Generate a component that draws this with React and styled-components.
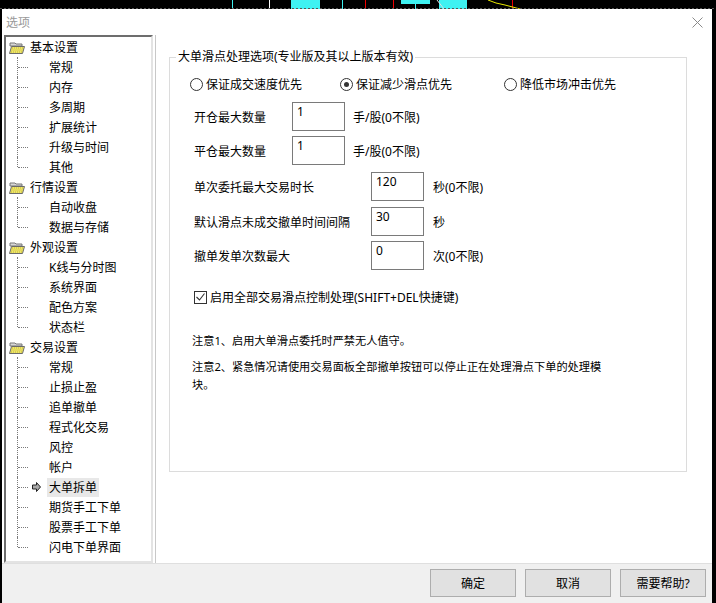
import React from 'react'
import styled, { createGlobalStyle } from 'styled-components'

const Global = createGlobalStyle`
  html, body {
    margin: 0;
    padding: 0;
    background: #000;
  }
  body {
    font-family: "Noto Sans", "Noto Sans CJK SC", sans-serif;
    font-size: 12px;
    color: #000;
  }
`

const Screen = styled.div`
  width: 716px;
  height: 603px;
  overflow: hidden;
  background: #000;
`

const Dialog = styled.div`
  margin-left: 2px;
  width: 710px;
  height: 594px;
  background: #fff;
  display: flex;
  flex-direction: column;
`

const TitleBar = styled.div`
  height: 26px;
  display: flex;
  align-items: center;
  justify-content: space-between;
  padding: 0 9px 0 4px;
  color: #999;
  font-size: 12px;
`

const Body = styled.div`
  height: 528px;
  display: flex;
`

const Tree = styled.div`
  margin-left: 2px;
  width: 145px;
  height: 524px;
  border-top: 2px solid #6d6d6d;
  border-left: 2px solid #6d6d6d;
  border-right: 2px solid #e3e3e3;
  border-bottom: 2px solid #e3e3e3;
  box-shadow: 2px 0 0 #fff, 3px 0 0 #c8c8c8;
  background: #fff;
  overflow: hidden;
`

const GroupRow = styled.div`
  height: 20px;
  display: flex;
  align-items: center;
  padding-left: 3px;
  gap: 5px;
  white-space: nowrap;
`

const ChildRow = styled.div`
  position: relative;
  height: 20px;
  display: flex;
  align-items: center;
  padding-left: 43px;
  white-space: nowrap;

  &::before {
    content: '';
    position: absolute;
    left: 11px;
    top: 0;
    height: ${({ $last }) => ($last ? '10px' : '20px')};
    border-left: 1px dotted #7a7a7a;
  }
  &::after {
    content: '';
    position: absolute;
    left: 12px;
    top: 10px;
    width: 10px;
    border-top: 1px dotted #7a7a7a;
  }
`

const ItemText = styled.span`
  padding: 0 2px;
  margin-left: -2px;
  line-height: 19px;
  background: ${({ $selected }) => ($selected ? '#e8e8e8' : 'transparent')};
`

const Pointer = styled.svg`
  position: absolute;
  left: 26px;
  top: 5px;
`

const Main = styled.div`
  flex: 1;
  padding-left: 16px;
`

const Group = styled.div`
  position: relative;
  margin-top: 22px;
  width: 516px;
  height: 395px;
  border: 1px solid #dcdcdc;
  padding: 18px 0 0 0;
  box-sizing: content-box;
`

const Legend = styled.span`
  position: absolute;
  top: -9px;
  left: 6px;
  padding: 0 2px;
  background: #fff;
  line-height: 16px;
`

const RadioRow = styled.div`
  display: flex;
  height: 16px;
  align-items: center;
  padding-left: 20px;
`

const RadioItem = styled.label`
  display: flex;
  align-items: center;
  gap: 3px;
  width: ${({ $w }) => $w}px;
  white-space: nowrap;
`

const RadioDot = styled.span`
  width: 11px;
  height: 11px;
  border: 1px solid #333;
  border-radius: 50%;
  display: flex;
  align-items: center;
  justify-content: center;

  &::after {
    content: '';
    width: 5px;
    height: 5px;
    border-radius: 50%;
    background: ${({ $on }) => ($on ? '#333' : 'transparent')};
  }
`

const FieldRow = styled.div`
  display: flex;
  align-items: center;
  height: 29px;
  margin-top: ${({ $top }) => $top}px;
  padding-left: 24px;
`

const FieldLabel = styled.span`
  width: ${({ $w }) => $w}px;
  white-space: nowrap;
`

const NumBox = styled.div`
  width: 51px;
  height: 27px;
  border: 1px solid #7a7a7a;
  padding: 1px 0 0 4px;
  box-sizing: border-box;
  width: 53px;
  height: 29px;
  line-height: 16px;
`

const Unit = styled.span`
  margin-left: ${({ $gap }) => $gap}px;
  white-space: nowrap;
`

const CheckRow = styled.div`
  display: flex;
  align-items: center;
  gap: 3px;
  height: 16px;
  margin-top: 19px;
  padding-left: 24px;
`

const CheckBox = styled.span`
  width: 11px;
  height: 11px;
  border: 1px solid #333;
  display: flex;
  align-items: center;
  justify-content: center;
`

const Notes = styled.div`
  margin-top: 27px;
  padding-left: 22px;
  width: 424px;
  display: flex;
  flex-direction: column;
  gap: 8px;
`

const Note = styled.p`
  margin: 0;
  font-size: 11.2px;
  line-height: 18px;
`

const Footer = styled.div`
  height: 40px;
  background: #f0f0f0;
  border-top: 1px solid #dfdfdf;
  box-sizing: border-box;
  display: flex;
  justify-content: flex-end;
  align-items: flex-start;
  padding: 5px 6px 0 0;
  gap: 9px;
`

const Button = styled.button`
  width: 86px;
  height: 28px;
  background: #e1e1e1;
  border: 1px solid #adadad;
  font-family: inherit;
  font-size: 12px;
  color: #000;
  padding: 0;
`

const Folder = () => (
  <svg width="16" height="13" viewBox="0 0 16 13">
    <path d="M1 2h5l1 1h6v2H1z" fill="#d8d8d8" stroke="#777" />
    <path d="M0.5 12.5L2.5 5.5h13l-2 7z" fill="#ece56f" stroke="#6a6a6a" />
    <path d="M3 7h11M2.5 9h11M2 11h11" stroke="#c9b92a" strokeDasharray="1 1" />
  </svg>
)

const ChartStrip = () => (
  <svg width="716" height="9" style={{ display: 'block' }}>
    <rect x="291" y="0" width="29" height="9" fill="#3ff2f2" />
    <rect x="401" y="0" width="29" height="4" fill="#3ff2f2" />
    <rect x="439" y="0" width="28" height="9" fill="#3ff2f2" />
    <line x1="232.5" y1="0" x2="232.5" y2="9" stroke="#3ff2f2" />
    <line x1="269.5" y1="0" x2="269.5" y2="9" stroke="#fff" />
    <line x1="342.5" y1="0" x2="342.5" y2="9" stroke="#3ff2f2" />
    <line x1="365.5" y1="0" x2="365.5" y2="9" stroke="#e00" />
    <line x1="393.5" y1="0" x2="393.5" y2="9" stroke="#e00" />
    <line x1="415.5" y1="4" x2="415.5" y2="9" stroke="#3ff2f2" />
    <line x1="437" y1="0" x2="444" y2="9" stroke="#ddd" />
    <line x1="512.5" y1="0" x2="512.5" y2="9" stroke="#e00" />
    <polyline points="488,0 496,3 505,5 520,9" fill="none" stroke="#e8e800" />
    <line x1="0" y1="8.5" x2="716" y2="8.5" stroke="#555" strokeDasharray="2 2" />
  </svg>
)

const tree = [
  { name: '基本设置', items: ['常规', '内存', '多周期', '扩展统计', '升级与时间', '其他'] },
  { name: '行情设置', items: ['自动收盘', '数据与存储'] },
  { name: '外观设置', items: ['K线与分时图', '系统界面', '配色方案', '状态栏'] },
  {
    name: '交易设置',
    items: ['常规', '止损止盈', '追单撤单', '程式化交易', '风控', '帐户', '大单拆单', '期货手工下单', '股票手工下单', '闪电下单界面']
  }
]

const fields = [
  { label: '开仓最大数量', value: '1', unit: '手/股(0不限)', w: 98, top: 10, gap: 8 },
  { label: '平仓最大数量', value: '1', unit: '手/股(0不限)', w: 98, top: 5, gap: 8 },
  { label: '单次委托最大交易时长', value: '120', unit: '秒(0不限)', w: 177, top: 7, gap: 9 },
  { label: '默认滑点未成交撤单时间间隔', value: '30', unit: '秒', w: 177, top: 6, gap: 9 },
  { label: '撤单发单次数最大', value: '0', unit: '次(0不限)', w: 177, top: 5, gap: 9 }
]

export default function App() {
  const selected = '大单拆单'
  return (
    <Screen>
      <Global />
      <ChartStrip />
      <Dialog>
        <TitleBar>
          <span>选项</span>
          <svg width="11" height="11" viewBox="0 0 11 11">
            <path d="M0.5 0.5l10 10M10.5 0.5l-10 10" stroke="#8a8a8a" strokeWidth="1" />
          </svg>
        </TitleBar>
        <Body>
          <Tree>
            {tree.map((g) => (
              <div key={g.name}>
                <GroupRow>
                  <Folder />
                  <span>{g.name}</span>
                </GroupRow>
                {g.items.map((it, i) => (
                  <ChildRow key={it + i} $last={i === g.items.length - 1}>
                    {g.name === '交易设置' && it === selected && (
                      <Pointer width="9" height="10" viewBox="0 0 9 10">
                        <path d="M0.5 3h4V0.5L8.5 5l-4 4.5V7h-4z" fill="#a8a8a8" stroke="#222" />
                      </Pointer>
                    )}
                    <ItemText $selected={g.name === '交易设置' && it === selected}>{it}</ItemText>
                  </ChildRow>
                ))}
              </div>
            ))}
          </Tree>
          <Main>
            <Group>
              <Legend>大单滑点处理选项(专业版及其以上版本有效)</Legend>
              <RadioRow>
                <RadioItem $w={150}>
                  <RadioDot />
                  保证成交速度优先
                </RadioItem>
                <RadioItem $w={164}>
                  <RadioDot $on />
                  保证减少滑点优先
                </RadioItem>
                <RadioItem $w={150}>
                  <RadioDot />
                  降低市场冲击优先
                </RadioItem>
              </RadioRow>
              {fields.map((f) => (
                <FieldRow key={f.label} $top={f.top}>
                  <FieldLabel $w={f.w}>{f.label}</FieldLabel>
                  <NumBox>{f.value}</NumBox>
                  <Unit $gap={f.gap}>{f.unit}</Unit>
                </FieldRow>
              ))}
              <CheckRow>
                <CheckBox>
                  <svg width="9" height="8" viewBox="0 0 9 8">
                    <path d="M0.5 4l3 3 5-6.5" fill="none" stroke="#333" strokeWidth="1.1" />
                  </svg>
                </CheckBox>
                启用全部交易滑点控制处理(SHIFT+DEL快捷键)
              </CheckRow>
              <Notes>
                <Note>注意1、启用大单滑点委托时严禁无人值守。</Note>
                <Note>注意2、紧急情况请使用交易面板全部撤单按钮可以停止正在处理滑点下单的处理模块。</Note>
              </Notes>
            </Group>
          </Main>
        </Body>
        <Footer>
          <Button>确定</Button>
          <Button>取消</Button>
          <Button>需要帮助?</Button>
        </Footer>
      </Dialog>
    </Screen>
  )
}
